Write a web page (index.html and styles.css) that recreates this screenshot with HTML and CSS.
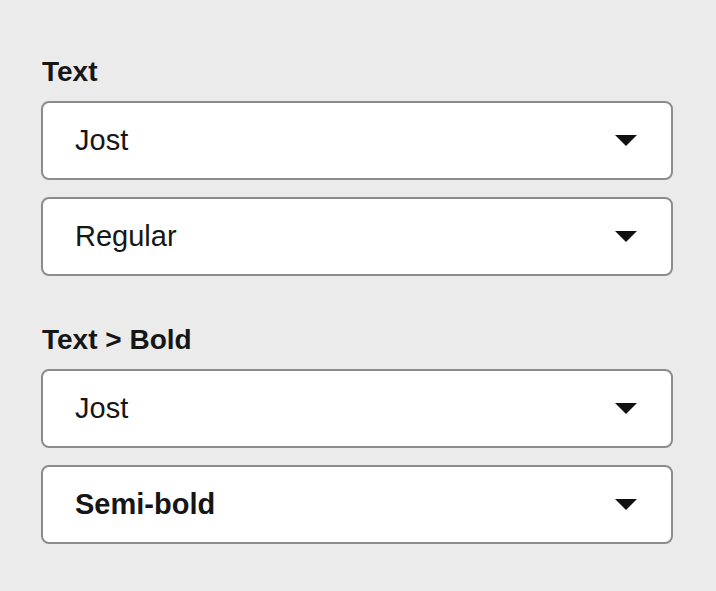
FILE: index.html
```html
<!DOCTYPE html>
<html lang="en">
<head>
    <meta charset="UTF-8">
    <meta name="viewport" content="width=device-width, initial-scale=1.0">
    <title>Font Settings</title>
    <link rel="stylesheet" href="styles.css">
</head>
<body>
    <div class="panel">
        <!-- Text -->
        <div class="group">
            <h3>Text</h3>
            <div class="select">
                <span>Jost</span>
                <svg class="caret" viewBox="0 0 22 11"><path d="M0 0h22L11 11z"/></svg>
            </div>
            <div class="select">
                <span>Regular</span>
                <svg class="caret" viewBox="0 0 22 11"><path d="M0 0h22L11 11z"/></svg>
            </div>
        </div>

        <!-- Text > Bold -->
        <div class="group">
            <h3>Text &gt; Bold</h3>
            <div class="select">
                <span>Jost</span>
                <svg class="caret" viewBox="0 0 22 11"><path d="M0 0h22L11 11z"/></svg>
            </div>
            <div class="select bold">
                <span>Semi-bold</span>
                <svg class="caret" viewBox="0 0 22 11"><path d="M0 0h22L11 11z"/></svg>
            </div>
        </div>
    </div>
</body>
</html>
```

FILE: styles.css
```css
body { margin: 0; background: #ebebeb; font-family: "Liberation Sans", Arial, sans-serif; color: #161616; }
.panel { padding: 56px 43px 0 41px; display: flex; flex-direction: column; gap: 48px; }
.group { display: flex; flex-direction: column; gap: 17px; }
.group h3 { margin: 0 0 -4px 1px; font-size: 28px; font-weight: bold; line-height: 32px; }
.select { height: 75px; display: flex; align-items: center; justify-content: space-between; padding: 0 34px 0 32px; background: #fff; border: 2px solid #8c8c8c; border-radius: 8px; }
.select span { font-size: 29px; }
.select.bold span { font-weight: bold; }
.caret { width: 22px; height: 11px; fill: #111; }
```
